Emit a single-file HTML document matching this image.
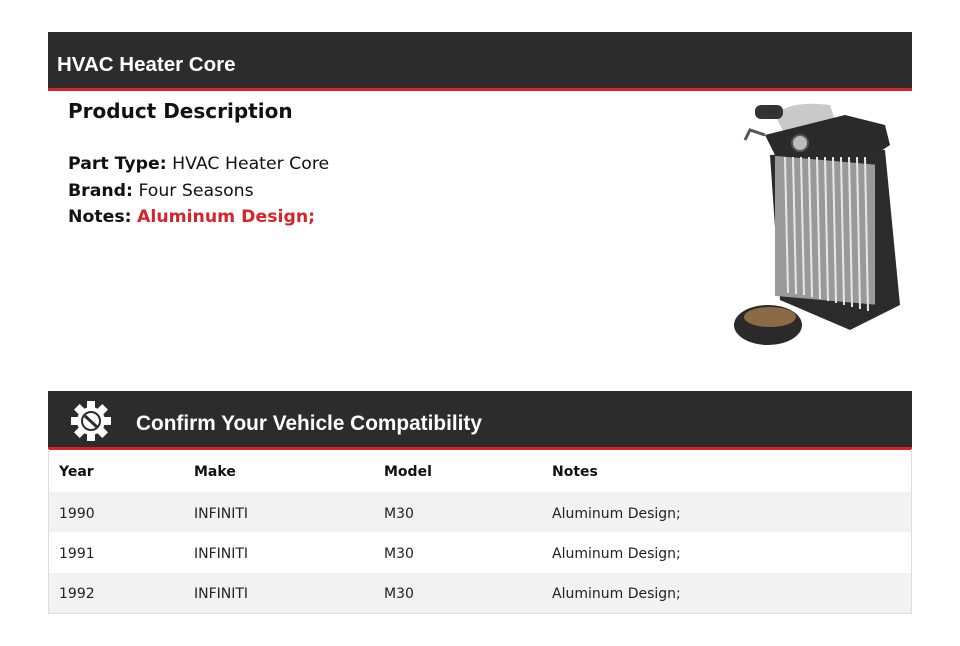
<!DOCTYPE html>
<html><head><meta charset="utf-8"><style>
body{margin:0;background:#fff;font-family:"Liberation Sans",Arial,sans-serif;width:960px;height:646px;position:relative;overflow:hidden}
.bar{position:absolute;left:48px;width:864px;background:#2d2c2c;border-bottom:3px solid #d8232a;color:#fff;font-weight:bold}
.t{position:absolute;font-family:"DejaVu Sans","Liberation Sans",sans-serif;color:#111}
table{position:absolute;left:48px;top:449px;width:864px;border-collapse:collapse;border:1px solid #ddd;border-top:none;font-family:"DejaVu Sans","Liberation Sans",sans-serif;font-size:14px;color:#222}
td,th{text-align:left;padding:3px 0 0 10px;height:37.4px}
th{height:40px;font-weight:bold;color:#111}
tr.g{background:#f2f2f2}
</style></head><body>
<div class="bar" style="top:32px;height:56px"><span style="position:absolute;left:9px;top:21px;font-size:20.5px">HVAC Heater Core</span></div>
<div class="t" style="left:68px;top:99px;font-size:20px;font-weight:bold">Product Description</div>
<div class="t" style="left:68px;top:151px;font-size:17.3px;line-height:26.5px">
<b>Part Type:</b> HVAC Heater Core<br><b>Brand:</b> Four Seasons<br><b>Notes:</b> <b style="color:#d8232a">Aluminum Design;</b></div>
<svg style="position:absolute;left:730px;top:95px" width="180" height="260" viewBox="0 0 180 260">
<path d="M45 20 Q60 5 100 10 L110 40 L60 50 Z" fill="#c9c9c9"/>
<rect x="25" y="10" width="28" height="14" rx="6" fill="#333"/>
<path d="M15 45 L20 35 L35 40" stroke="#555" stroke-width="3" fill="none"/>
<path d="M35 40 L115 20 L155 30 L160 50 L145 60 L45 60 Z" fill="#2a2a2a"/>
<circle cx="70" cy="48" r="8" fill="#bbb" stroke="#555" stroke-width="2"/>
<path d="M40 60 L155 55 L170 210 L120 235 L50 205 Z" fill="#2b2b2b"/>
<rect x="45" y="62" width="100" height="140" fill="#9a9a9a" transform="skewY(5) translate(0,-5)"/>
<g stroke="#e8e8e8" stroke-width="2">
<line x1="55" y1="62" x2="58" y2="198"/><line x1="63" y1="62" x2="66" y2="199"/><line x1="71" y1="62" x2="74" y2="200"/><line x1="79" y1="62" x2="82" y2="202"/><line x1="87" y1="62" x2="90" y2="204"/><line x1="95" y1="62" x2="98" y2="206"/><line x1="103" y1="62" x2="106" y2="208"/><line x1="111" y1="62" x2="114" y2="210"/><line x1="119" y1="62" x2="122" y2="212"/><line x1="127" y1="62" x2="130" y2="214"/><line x1="135" y1="62" x2="138" y2="216"/></g>
<ellipse cx="38" cy="230" rx="34" ry="20" fill="#2a2a2a"/>
<ellipse cx="40" cy="222" rx="26" ry="10" fill="#8a6b45"/>
</svg>
<div class="bar" style="top:391px;height:56px">
<svg style="position:absolute;left:22px;top:9px" width="42" height="42" viewBox="0 0 42 42"><g fill="#fff"><circle cx="21" cy="21" r="14"/>
<g transform="translate(21 21)"><rect x="-4" y="-20" width="8" height="8"/><rect x="-4" y="12" width="8" height="8"/><rect x="-20" y="-4" width="8" height="8"/><rect x="12" y="-4" width="8" height="8"/>
<g transform="rotate(45)"><rect x="-4" y="-20" width="8" height="8"/><rect x="-4" y="12" width="8" height="8"/><rect x="-20" y="-4" width="8" height="8"/><rect x="12" y="-4" width="8" height="8"/></g></g></g>
<circle cx="21" cy="21" r="9" fill="none" stroke="#2d2c2c" stroke-width="2"/><path d="M15 16 L27 27" stroke="#2d2c2c" stroke-width="3"/></svg>
<span style="position:absolute;left:88px;top:21px;font-size:20.8px">Confirm Your Vehicle Compatibility</span></div>
<table>
<tr><th style="width:125px">Year</th><th style="width:180px">Make</th><th style="width:158px">Model</th><th>Notes</th></tr>
<tr class="g"><td>1990</td><td>INFINITI</td><td>M30</td><td>Aluminum Design;</td></tr>
<tr><td>1991</td><td>INFINITI</td><td>M30</td><td>Aluminum Design;</td></tr>
<tr class="g"><td>1992</td><td>INFINITI</td><td>M30</td><td>Aluminum Design;</td></tr>
</table>
</body></html>
